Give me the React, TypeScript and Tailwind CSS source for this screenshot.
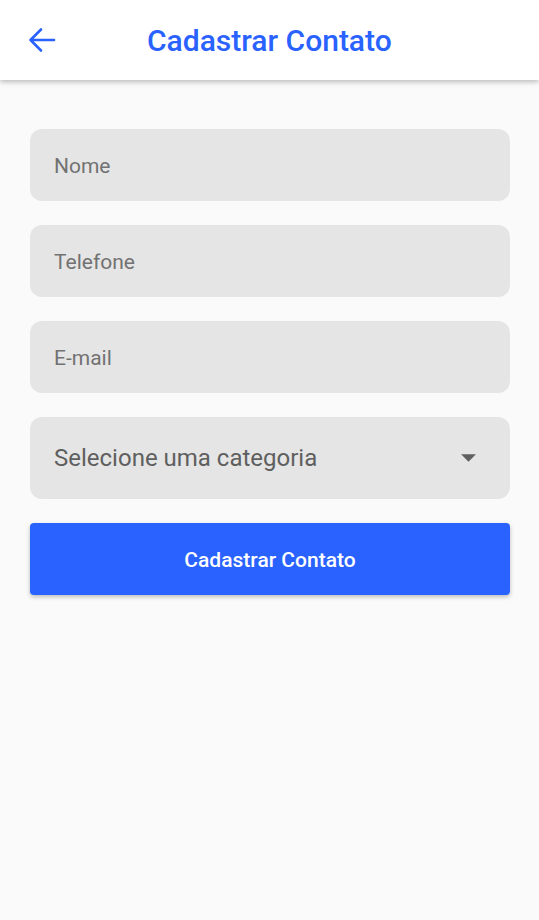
const Field = ({ label }: { label: string }) => (
	<div className="flex items-center h-[72px] rounded-xl bg-[#e5e5e5] px-6 pt-[3px]">
		<span className="text-[21px] text-[#727272]">{label}</span>
	</div>
);

export default function App() {
	return (
		<div className="min-h-[920px] bg-[#fafafa]" style={{ fontFamily: "Roboto, sans-serif" }}>
			<header className="flex items-center h-[80px] bg-white shadow-[0_2px_5px_rgba(0,0,0,0.25)] relative">
				<button className="ml-[28px] w-[28px] h-[28px] flex items-center justify-center text-[#2962ff]">
					<svg width="28" height="26" viewBox="0 0 28 26" fill="none" stroke="currentColor" strokeWidth="2.6" strokeLinecap="round" strokeLinejoin="round">
						<path d="M2.5 13H26M13 2.5L2.5 13L13 23.5" />
					</svg>
				</button>
				<h1 className="ml-[91px] text-[30px] font-medium text-[#2962ff]">Cadastrar Contato</h1>
			</header>

			<main className="flex flex-col gap-6 pl-[30px] pr-[29px] pt-[49px]">
				<Field label="Nome" />
				<Field label="Telefone" />
				<Field label="E-mail" />
				<div className="flex items-center justify-between h-[82px] rounded-xl bg-[#e5e5e5] pl-6 pr-[33px]">
					<span className="text-[24px] text-[#5f5f5f]">Selecione uma categoria</span>
					<svg width="17" height="9" viewBox="0 0 16 8" fill="#5f5f5f">
						<path d="M1 0h14L8 7z" />
					</svg>
				</div>
				<button className="h-[72px] rounded bg-[#2962ff] text-white text-[21px] font-medium pt-[3px] shadow-[0_2px_4px_rgba(0,0,0,0.25)]">
					Cadastrar Contato
				</button>
			</main>
		</div>
	);
}
